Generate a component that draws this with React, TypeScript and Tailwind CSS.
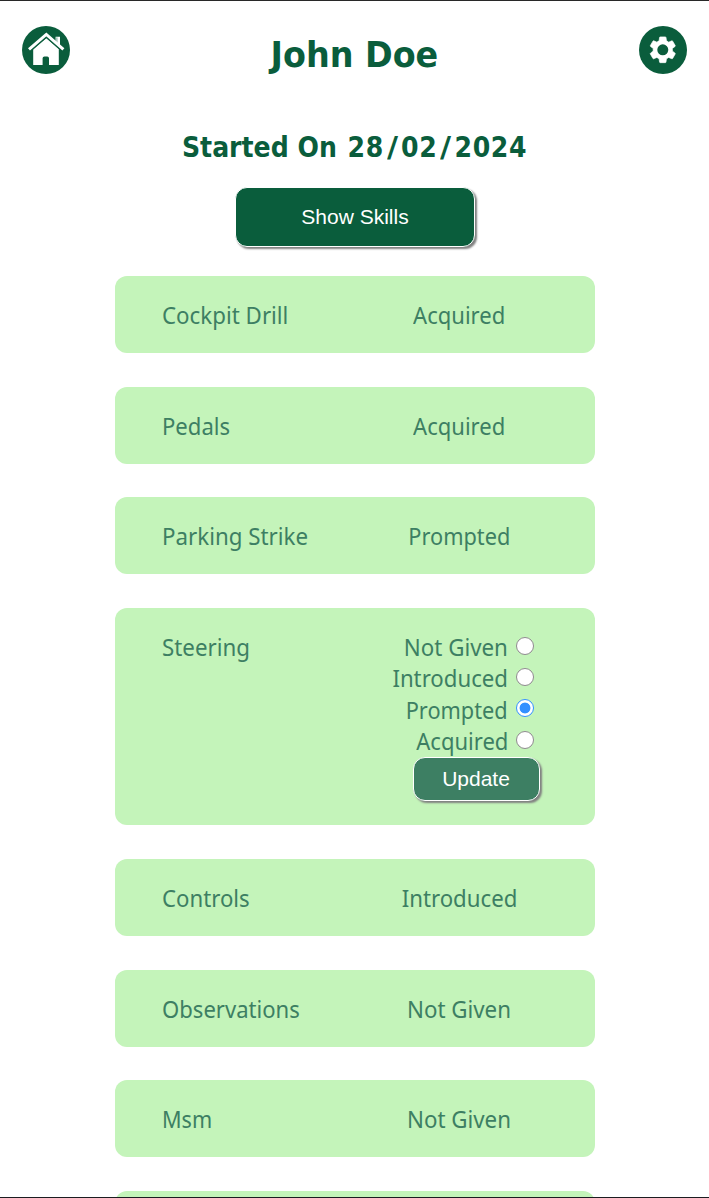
import { useState } from "react";
import clsx from "clsx";

const levels = [
  { name: "Not Given", scale: "scale-x-[0.93]" },
  { name: "Introduced", scale: "scale-x-[0.925]" },
  { name: "Prompted", scale: "scale-x-[0.905]" },
  { name: "Acquired", scale: "scale-x-[0.918]" },
];

const skills = [
  { name: "Cockpit Drill", status: 3, gap: "mt-0", scale: "scale-x-[0.93]" },
  { name: "Pedals", status: 3, gap: "mt-[34px]", scale: "scale-x-[0.92]" },
  { name: "Parking Strike", status: 2, gap: "mt-[33px]", scale: "scale-x-[0.93]" },
  { name: "Steering", status: 2, gap: "mt-[34px]", scale: "scale-x-[0.93]", editing: true },
  { name: "Controls", status: 1, gap: "mt-[34px]", scale: "scale-x-[0.925]" },
  { name: "Observations", status: 0, gap: "mt-[34px]", scale: "scale-x-[0.92]" },
  { name: "Msm", status: 0, gap: "mt-[33px]", scale: "scale-x-[0.9]" },
  { name: "", status: -1, gap: "mt-[34px]", scale: "" },
];

function HomeIcon() {
  return (
    <svg viewBox="0 0 48 48" className="size-12">
      <circle cx="24" cy="24" r="24" fill="#0a5d3c" />
      <path d="M33.6 10.7h4.4v9.5l-4.4-3.9z" fill="#fff" />
      <path d="M34.9 11.4v6" stroke="#0a5d3c" strokeWidth="0.6" />
      <path d="M24.3 12 11.2 23V39H20.6V32.3Q20.6 30.5 22.4 30.5H25.2Q27 30.5 27 32.3V39H36.8V23Z" fill="#fff" />
      <path d="M8.2 24.6 24.3 10.5 40.4 24.6" fill="none" stroke="#0a5d3c" strokeWidth="2.4" />
      <path d="M7 23.4 24.3 8.4 41.4 23.4" fill="none" stroke="#fff" strokeWidth="3" />
    </svg>
  );
}

function SettingsIcon() {
  return (
    <svg viewBox="0 0 48 48" className="size-12">
      <circle cx="24" cy="24" r="24" fill="#0a5d3c" />
      <g transform="translate(7.7 7.7) scale(1.34)">
        <path
          fill="#fff"
          stroke="#fff"
          strokeWidth="0.5"
          d="M19.14 12.94c.04-.3.06-.61.06-.94s-.02-.64-.07-.94l2.03-1.58a.49.49 0 0 0 .12-.61l-1.92-3.32a.488.488 0 0 0-.59-.22l-2.39.96a7.02 7.02 0 0 0-1.62-.94l-.36-2.54a.484.484 0 0 0-.48-.41h-3.84a.484.484 0 0 0-.47.41l-.36 2.54c-.59.24-1.13.57-1.62.94l-2.39-.96a.488.488 0 0 0-.59.22L2.74 8.87a.49.49 0 0 0 .12.61l2.03 1.58c-.05.3-.09.63-.09.94s.02.64.07.94l-2.03 1.58a.49.49 0 0 0-.12.61l1.92 3.32c.12.22.37.29.59.22l2.39-.96c.5.38 1.03.7 1.62.94l.36 2.54c.05.24.24.41.48.41h3.84c.24 0 .44-.17.47-.41l.36-2.54c.59-.24 1.13-.56 1.62-.94l2.39.96c.22.08.47 0 .59-.22l1.92-3.32a.49.49 0 0 0-.12-.61l-2.01-1.58z"
        />
        <circle cx="12" cy="12" r="4.1" fill="#0a5d3c" />
      </g>
    </svg>
  );
}

function SkillEditor({ initial }: { initial: number }) {
  const [value, setValue] = useState(initial);
  return (
    <div className="flex w-[192px] flex-col">
      {levels.map((level, i) => (
        <label key={level.name} className="flex h-[31.33px] items-center justify-end gap-2 pr-[21px] leading-[31px]">
          <span className={clsx("inline-block origin-right", level.scale)}>{level.name}</span>
          <input
            type="radio"
            name="level"
            checked={value === i}
            onChange={() => setValue(i)}
            className="mb-[2px] size-[18px] shrink-0 appearance-none rounded-full border-[1.5px] border-[#8f8a8f] bg-white checked:border-[#3390ff] checked:bg-[radial-gradient(circle,#3390ff_5px,#fff_5.8px)]"
          />
        </label>
      ))}
      <button className="mt-px ml-[50px] h-[44px] w-[127px] shrink-0 rounded-xl border border-white bg-[#3d7f63] pr-px pb-px font-['Liberation_Sans',sans-serif] text-[21px] leading-none text-white shadow-[2px_2px_2px_#808080]">
        Update
      </button>
    </div>
  );
}

export default function App() {
  return (
    <main className="flex h-[1198px] w-[709px] flex-col overflow-hidden border-t border-b border-t-[#282828] border-b-[#1c1c20] bg-white font-['Noto_Sans','Open_Sans',sans-serif] text-[24px] text-[#3d7f63]">
      <header className="flex h-[98px] shrink-0 items-center justify-between px-[22px] text-[#0a5d3c]">
        <button aria-label="Home"><HomeIcon /></button>
        <h1 className="scale-x-[1.03] pt-[9px] font-['DejaVu_Sans_Condensed','DejaVu_Sans',sans-serif] text-[36px] leading-none font-bold">John Doe</h1>
        <button aria-label="Settings"><SettingsIcon /></button>
      </header>
      <h2 className="mt-[29px] h-[40px] shrink-0 text-center font-['DejaVu_Sans_Condensed','DejaVu_Sans',sans-serif] text-[28px] leading-[40px] font-bold text-[#0a5d3c]">
        <span className="mr-[2px]">Started On</span> <span className="tracking-[0.6px]">28</span>
        <span className="mx-[4px] inline-block scale-x-[1.2]">/</span>
        <span className="tracking-[0.6px]">02</span>
        <span className="mx-[4px] inline-block scale-x-[1.2]">/</span>
        <span className="tracking-[0.6px]">2024</span>
      </h2>
      <button className="mt-[19px] ml-[235px] h-[60px] w-[240px] shrink-0 rounded-xl border border-white bg-[#0a5d3c] pb-[2px] font-['Liberation_Sans',sans-serif] text-[21px] leading-none text-white shadow-[2px_2px_2px_#808080]">
        Show Skills
      </button>
      <ul className="mt-[29px] ml-[115px] flex w-[480px] flex-col">
        {skills.map((skill) => (
          <li
            key={skill.name}
            className={clsx(
              "flex shrink-0 rounded-xl bg-[#c4f4ba] pt-[23px] pl-[47px]",
              skill.editing ? "h-[217px]" : "h-[77px]",
              skill.gap,
            )}
          >
            <div className="w-[201px] shrink-0 leading-[31px]">
              <span className={clsx("inline-block origin-left", skill.scale)}>{skill.name}</span>
            </div>
            {skill.editing ? (
              <SkillEditor initial={skill.status} />
            ) : (
              <div className="w-[192px] text-center leading-[31px]">
                {skill.status >= 0 && (
                  <span className={clsx("inline-block", levels[skill.status].scale)}>{levels[skill.status].name}</span>
                )}
              </div>
            )}
          </li>
        ))}
      </ul>
    </main>
  );
}
